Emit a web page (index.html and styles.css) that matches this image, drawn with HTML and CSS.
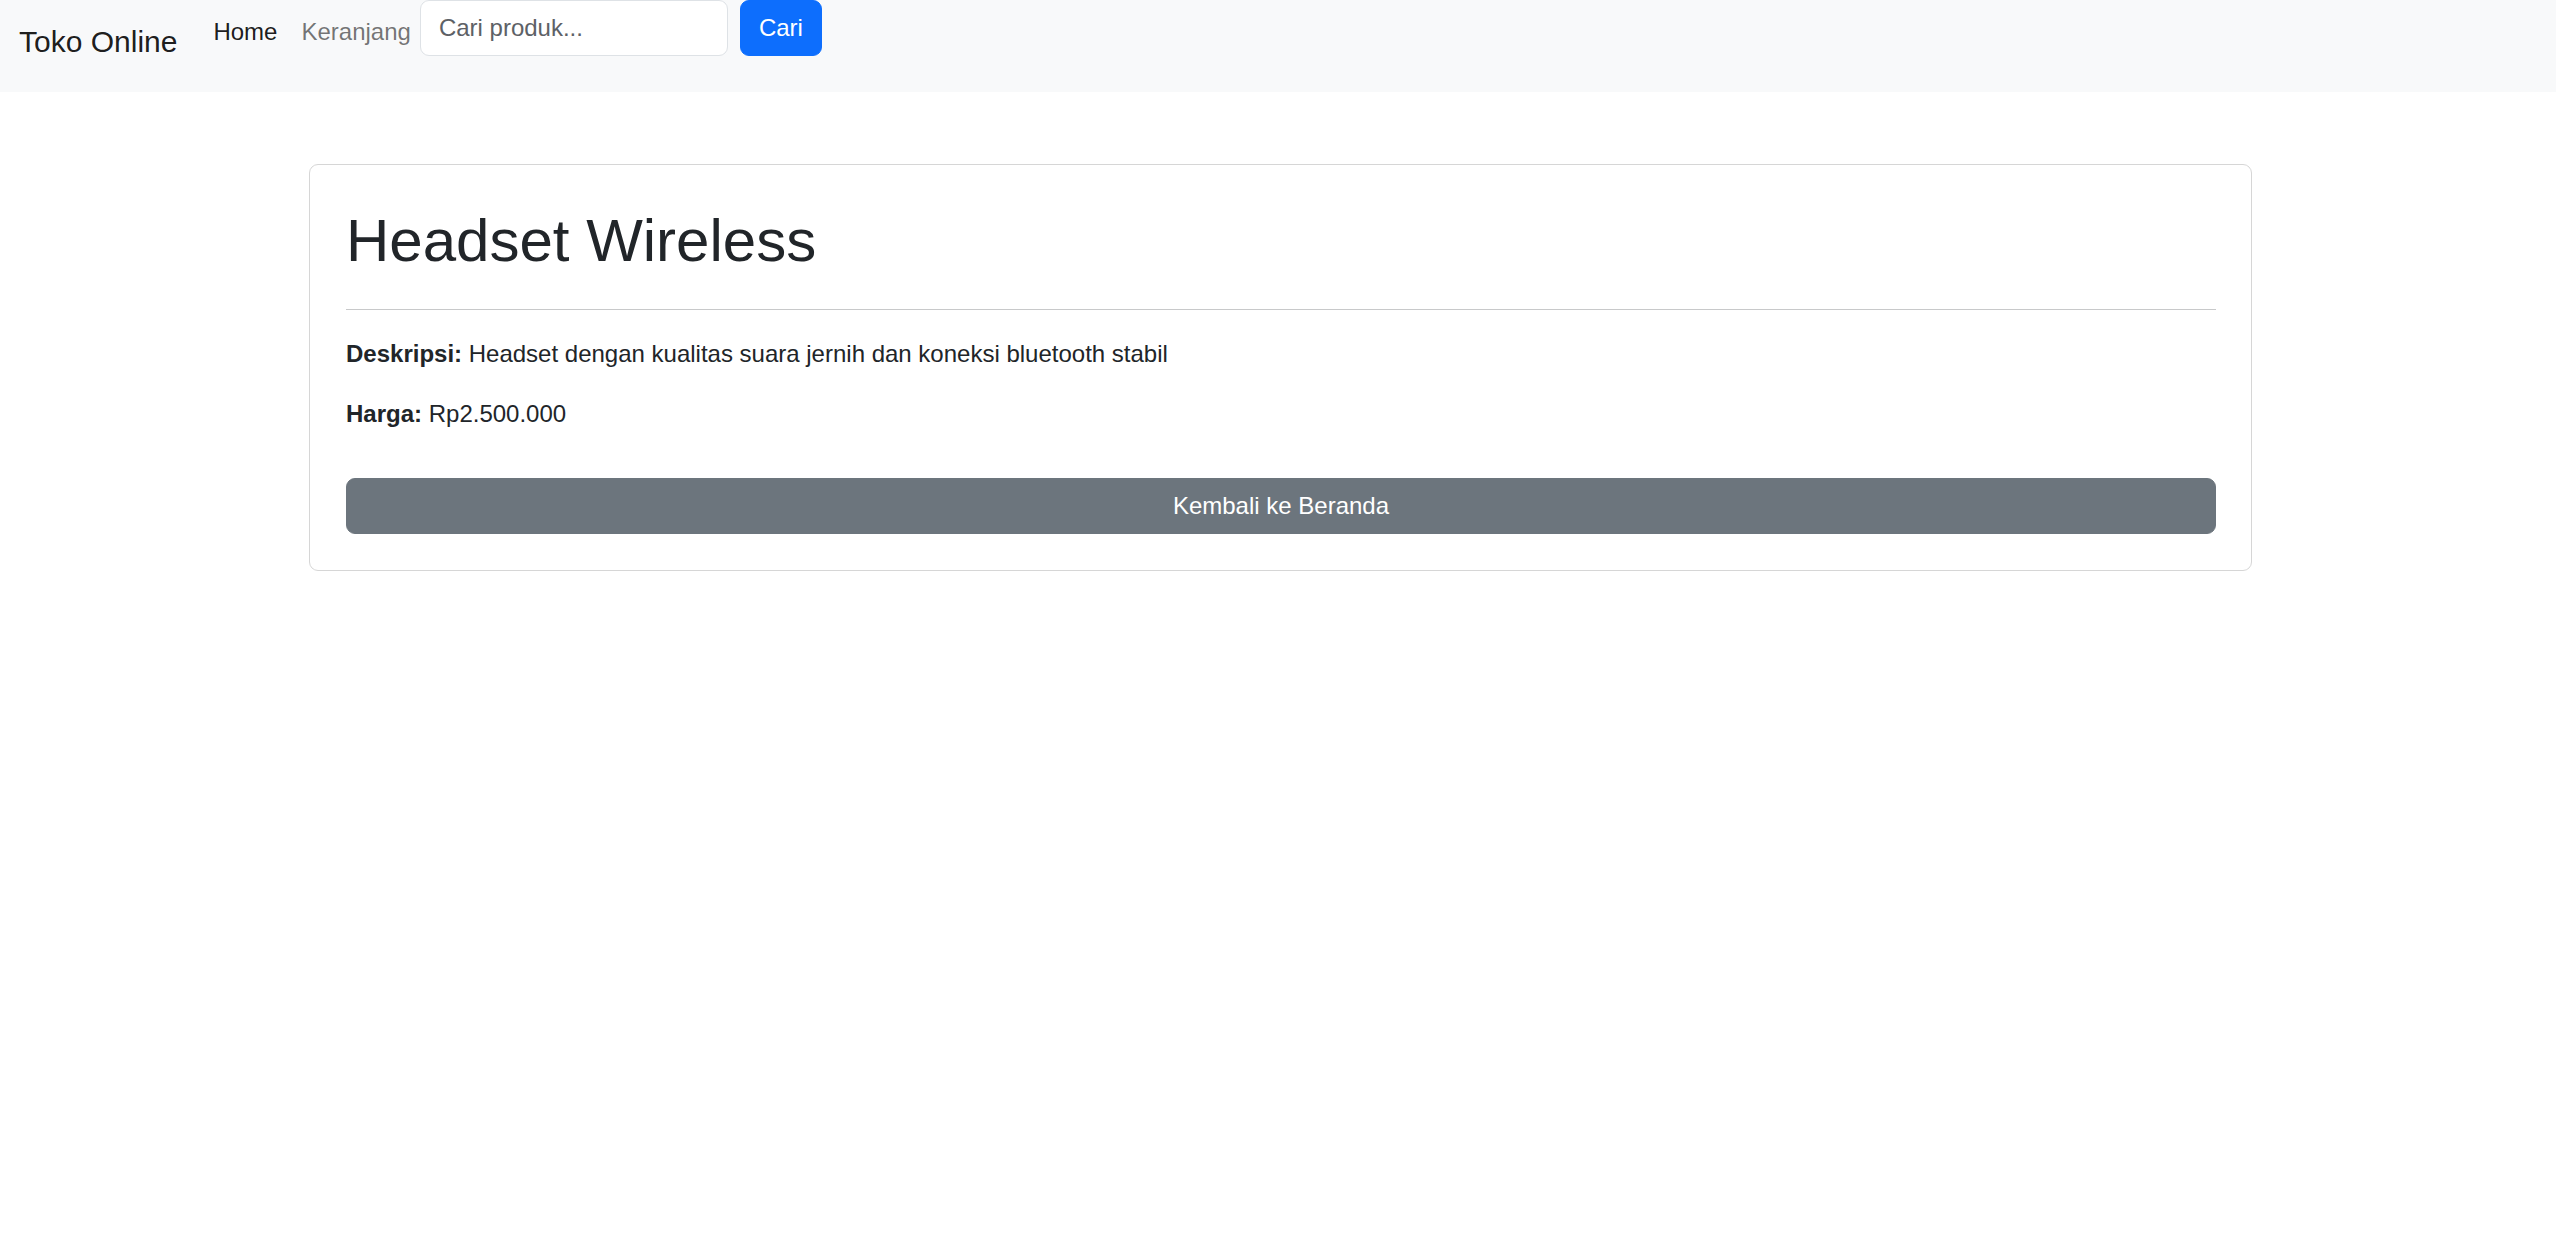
FILE: index.html
```html
<!DOCTYPE html>
<html lang="id">
<head>
<meta charset="utf-8">
<title>Headset Wireless - Toko Online</title>
<link rel="stylesheet" href="styles.css">
</head>
<body>
<nav class="navbar">
  <a class="brand" href="#">Toko Online</a>
  <ul class="nav">
    <li><a class="nav-link active" href="#">Home</a></li>
    <li><a class="nav-link" href="#">Keranjang</a></li>
  </ul>
  <form class="search">
    <input class="search-input" type="text" placeholder="Cari produk...">
    <button class="btn-primary" type="button">Cari</button>
  </form>
</nav>
<main class="page">
  <section class="card">
    <h1 class="title">Headset Wireless</h1>
    <hr class="divider">
    <p class="info"><strong>Deskripsi:</strong> Headset dengan kualitas suara jernih dan koneksi bluetooth stabil</p>
    <p class="info"><strong>Harga:</strong> Rp2.500.000</p>
    <a class="btn-secondary" href="#">Kembali ke Beranda</a>
  </section>
</main>
</body>
</html>
```
FILE: styles.css
```css
* { box-sizing: border-box; }
html, body { margin: 0; padding: 0; }
body {
  font-family: "Liberation Sans", Arial, sans-serif;
  font-size: 24px;
  line-height: 36px;
  color: #212529;
  background: #fff;
}
a { text-decoration: none; }

.navbar {
  display: flex;
  align-items: flex-start;
  height: 92px;
  padding-left: 19px;
  background: #f8f9fa;
}
.brand {
  margin-top: 19px;
  margin-right: 24px;
  font-size: 30px;
  line-height: 45px;
  color: rgba(0, 0, 0, 0.9);
}
.nav {
  display: flex;
  list-style: none;
  margin: 14px 0 0 0;
  padding: 0;
}
.nav-link {
  display: block;
  padding: 0 12px;
  line-height: 36px;
  color: rgba(0, 0, 0, 0.55);
}
.nav-link.active { color: rgba(0, 0, 0, 0.9); }

.search {
  display: flex;
  gap: 12px;
  margin: 0 0 0 -3px;
}
.search-input {
  width: 308px;
  height: 56px;
  padding: 9px 18px;
  font-family: inherit;
  font-size: 24px;
  line-height: 36px;
  color: #212529;
  background: #fff;
  border: 1px solid #dee2e6;
  border-radius: 9px;
  outline: none;
}
.search-input::placeholder { color: #5d6166; }
.btn-primary {
  height: 56px;
  padding: 9px 18px;
  font-family: inherit;
  font-size: 24px;
  line-height: 36px;
  color: #fff;
  background: #0d6efd;
  border: 1px solid #0d6efd;
  border-radius: 9px;
}

.page {
  padding: 72px 304px 0 309px;
}
.card {
  display: flex;
  flex-direction: column;
  padding: 36px 35px 36px 36px;
  background: #fff;
  border: 1px solid #d6d6d6;
  border-radius: 9px;
}
.title {
  margin: 0 0 4px 0;
  font-size: 60px;
  line-height: 80px;
  font-weight: 500;
}
.divider {
  margin: 24px 0 26px 0;
  border: 0;
  border-top: 1px solid #c8c9ca;
}
.info {
  margin: 0 0 24px 0;
}
.info strong { font-weight: 700; }
.btn-secondary {
  display: block;
  height: 56px;
  margin-top: 22px;
  padding: 9px 18px;
  text-align: center;
  color: #fff;
  background: #6c757d;
  border: 1px solid #6c757d;
  border-radius: 9px;
}
```
